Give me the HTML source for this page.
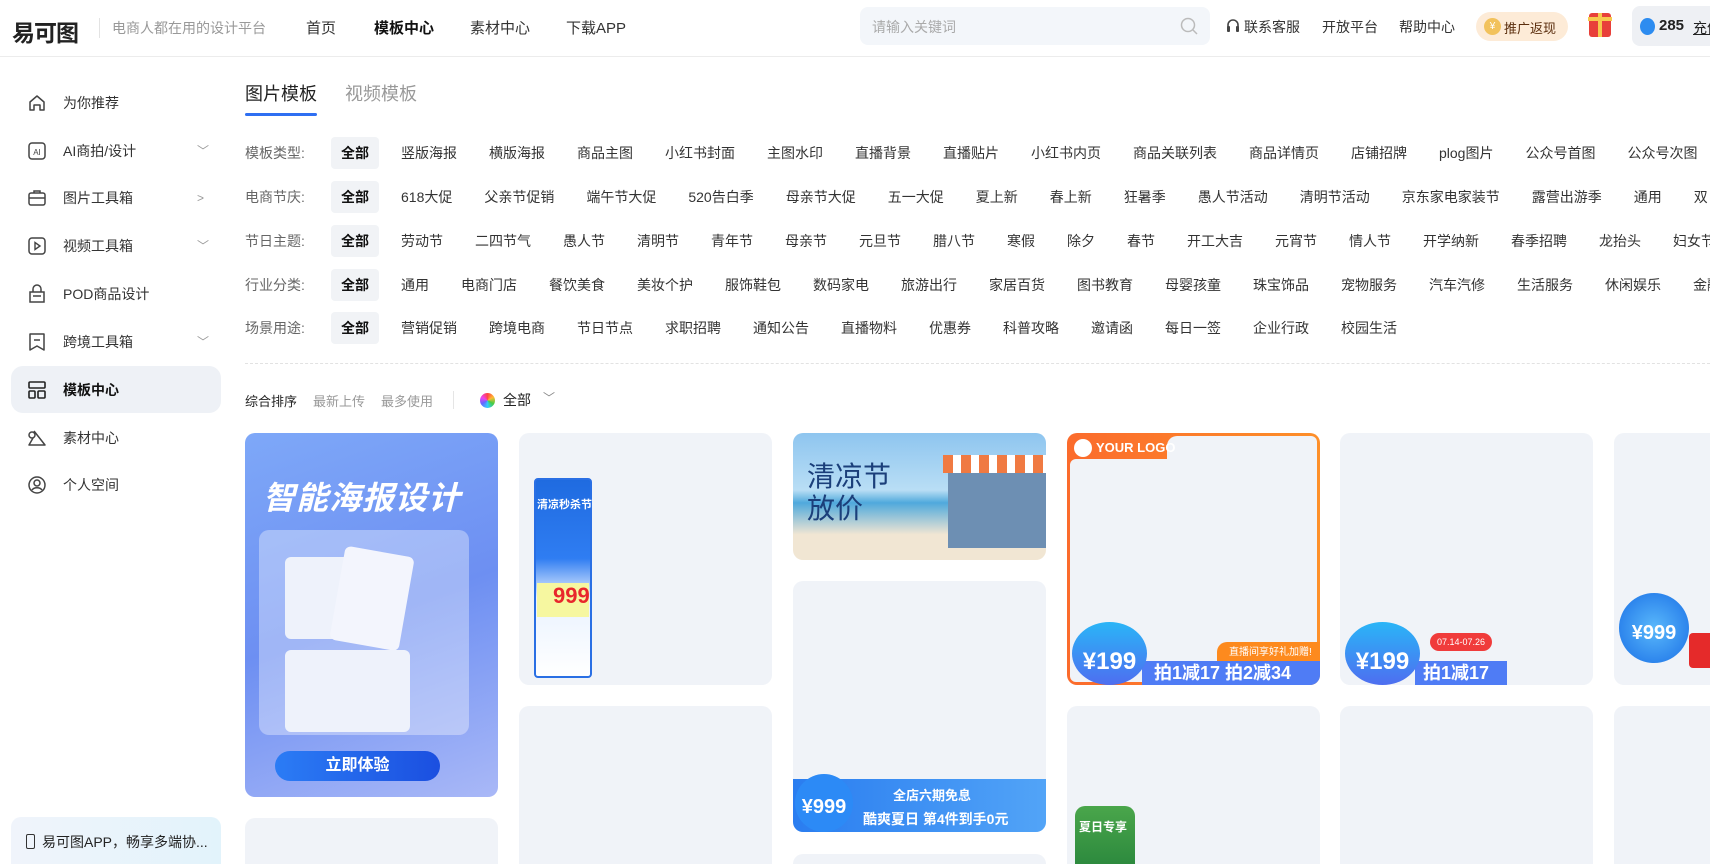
<!DOCTYPE html>
<html><head><meta charset="utf-8">
<style>
*{box-sizing:border-box;margin:0;padding:0}
html,body{width:1710px;height:864px;overflow:hidden}
body{background:#fff;font-family:"Liberation Sans","Noto Sans CJK SC",sans-serif;color:#333}
#wrap{position:relative;width:1710px;height:864px;overflow:hidden}
.abs{position:absolute}
.hdr{position:absolute;left:0;top:0;width:1710px;height:57px;border-bottom:1px solid #ececec}
.nav{position:absolute;top:17px;font-size:15px;color:#333}
.side .it{position:absolute;left:11px;width:210px;height:47px;display:flex;align-items:center;font-size:14px;color:#333;border-radius:12px}
.side .it svg{position:absolute;left:16px}
.side .it span{position:absolute;left:52px}
.side .chev{position:absolute;left:186px;color:#999;font-size:12px}
.row{position:absolute;left:245px;height:32px;display:flex;align-items:center;font-size:14px;white-space:nowrap}
.row .lb{color:#666;width:86px}
.row .c{padding:0 10px;margin-right:12px;height:32px;line-height:32px;color:#333;border-radius:4px}
.row .c.on{background:#f1f3f6;font-weight:bold;color:#111}
.card{position:absolute;width:253px;border-radius:10px;background:#f0f3f8;overflow:hidden}
.cut{border-radius:10px 10px 0 0}
</style></head><body><div id="wrap">

<div class="hdr">
  <div class="abs" style="left:12px;top:14px;font-size:23px;font-weight:bold;color:#222;letter-spacing:-1px">易可图</div>
  <div class="abs" style="left:99px;top:18px;width:1px;height:20px;background:#e3e3e3"></div>
  <div class="abs" style="left:112px;top:18px;font-size:14px;color:#999">电商人都在用的设计平台</div>
  <div class="nav" style="left:306px">首页</div>
  <div class="nav" style="left:374px;font-weight:bold;color:#111">模板中心</div>
  <div class="nav" style="left:470px">素材中心</div>
  <div class="nav" style="left:566px">下载APP</div>
  <div class="abs" style="left:860px;top:7px;width:350px;height:38px;background:#f3f6fa;border-radius:8px">
    <span class="abs" style="left:12px;top:10px;font-size:14px;color:#aaa">请输入关键词</span>
    <svg class="abs" style="left:320px;top:10px" width="18" height="18" viewBox="0 0 18 18"><circle cx="8" cy="8" r="6.5" fill="none" stroke="#bbb" stroke-width="1.5"/><path d="M13 13l4 4" stroke="#bbb" stroke-width="1.5"/></svg>
  </div>
  <svg class="abs" style="left:1225px;top:17px" width="16" height="18" viewBox="0 0 16 18"><path d="M3 10V8a5 5 0 0 1 10 0v2" fill="none" stroke="#444" stroke-width="1.6"/><rect x="2" y="9" width="3" height="6" rx="1" fill="#444"/><rect x="11" y="9" width="3" height="6" rx="1" fill="#444"/></svg>
  <div class="nav" style="left:1244px;font-size:14px;top:17px">联系客服</div>
  <div class="nav" style="left:1322px;font-size:14px;top:17px">开放平台</div>
  <div class="nav" style="left:1399px;font-size:14px;top:17px">帮助中心</div>
  <div class="abs" style="left:1476px;top:12px;width:92px;height:29px;border-radius:15px;background:#fdebd7">
    <div class="abs" style="left:8px;top:6px;width:17px;height:17px;border-radius:50%;background:#f2c25c;color:#fff;font-size:10px;text-align:center;line-height:17px">¥</div>
    <span class="abs" style="left:28px;top:6px;font-size:13px;color:#5a2d0c">推广返现</span>
  </div>
  <div class="abs" style="left:1589px;top:13px;width:22px;height:24px;background:#e8403a;border-radius:3px"><div class="abs" style="left:9px;top:0;width:4px;height:24px;background:#f7c94d"></div><div class="abs" style="left:-1px;top:4px;width:24px;height:4px;background:#f7c94d"></div></div>
  <div class="abs" style="left:1632px;top:6px;width:78px;height:40px;background:#eef0f4;border-radius:8px 0 0 8px;overflow:hidden">
    <div class="abs" style="left:8px;top:12px;width:15px;height:17px;border-radius:50%;background:#2d8cf0"></div>
    <span class="abs" style="left:27px;top:11px;font-size:15px;font-weight:bold;color:#222">285</span>
    <span class="abs" style="left:61px;top:12px;font-size:14px;color:#222;text-decoration:underline;white-space:nowrap">充值</span>
  </div>
</div>

<div class="side">
  <div class="it" style="top:79px"><svg width="20" height="20" viewBox="0 0 20 20"><path d="M3 9l7-6 7 6v8h-4v-5h-6v5H3z" fill="none" stroke="#444" stroke-width="1.5" stroke-linejoin="round"/></svg><span>为你推荐</span></div>
  <div class="it" style="top:127px"><svg width="20" height="20" viewBox="0 0 20 20"><rect x="2" y="2" width="16" height="16" rx="3" fill="none" stroke="#444" stroke-width="1.5"/><text x="10" y="14" font-size="8" text-anchor="middle" fill="#444" font-family="Liberation Sans">AI</text></svg><span>AI商拍/设计</span><i class="chev" style="font-style:normal">﹀</i></div>
  <div class="it" style="top:174px"><svg width="20" height="20" viewBox="0 0 20 20"><rect x="2" y="5" width="16" height="12" rx="2" fill="none" stroke="#444" stroke-width="1.5"/><path d="M7 5V3h6v2M2 10h16" fill="none" stroke="#444" stroke-width="1.5"/></svg><span>图片工具箱</span><i class="chev" style="font-style:normal">&gt;</i></div>
  <div class="it" style="top:222px"><svg width="20" height="20" viewBox="0 0 20 20"><rect x="2" y="2" width="16" height="16" rx="3" fill="none" stroke="#444" stroke-width="1.5"/><path d="M8 6.5v7l5-3.5z" fill="none" stroke="#444" stroke-width="1.4"/></svg><span>视频工具箱</span><i class="chev" style="font-style:normal">﹀</i></div>
  <div class="it" style="top:270px"><svg width="20" height="20" viewBox="0 0 20 20"><path d="M3 8h14v10H3zM6 8V5a4 4 0 0 1 8 0v3M6 12h8" fill="none" stroke="#444" stroke-width="1.5"/></svg><span>POD商品设计</span></div>
  <div class="it" style="top:318px"><svg width="20" height="20" viewBox="0 0 20 20"><path d="M3 2h14v16l-7-4-7 4zM7 8h6" fill="none" stroke="#444" stroke-width="1.5" stroke-linejoin="round"/></svg><span>跨境工具箱</span><i class="chev" style="font-style:normal">﹀</i></div>
  <div class="it" style="top:366px;background:#eef1f6"><svg width="20" height="20" viewBox="0 0 20 20"><rect x="2" y="2" width="16" height="6" rx="1" fill="none" stroke="#222" stroke-width="1.6"/><rect x="2" y="11" width="6" height="7" rx="1" fill="none" stroke="#222" stroke-width="1.6"/><rect x="11" y="11" width="7" height="7" rx="1" fill="none" stroke="#222" stroke-width="1.6"/></svg><span style="font-weight:bold;color:#111">模板中心</span></div>
  <div class="it" style="top:414px"><svg width="20" height="20" viewBox="0 0 20 20"><path d="M7 3l11 14H2l4-7" fill="none" stroke="#444" stroke-width="1.5" stroke-linejoin="round"/><circle cx="5" cy="7" r="3" fill="none" stroke="#444" stroke-width="1.5"/></svg><span>素材中心</span></div>
  <div class="it" style="top:461px"><svg width="20" height="20" viewBox="0 0 20 20"><circle cx="10" cy="10" r="8" fill="none" stroke="#444" stroke-width="1.5"/><circle cx="10" cy="8" r="3" fill="none" stroke="#444" stroke-width="1.5"/><path d="M5 15c2-3 8-3 10 0" fill="none" stroke="#444" stroke-width="1.5"/></svg><span>个人空间</span></div>
  <div class="abs" style="left:11px;top:817px;width:210px;height:47px;border-radius:10px 10px 0 0;background:linear-gradient(90deg,#f0f4fb,#e2f3fb)">
    <div class="abs" style="left:15px;top:17px;width:9px;height:15px;border:1.5px solid #333;border-radius:2px"></div>
    <span class="abs" style="left:31px;top:15px;font-size:14px;color:#222">易可图APP，畅享多端协...</span>
  </div>
</div>

<div class="abs" style="left:245px;top:80px;font-size:18px;color:#222">图片模板</div>
<div class="abs" style="left:345px;top:80px;font-size:18px;color:#999">视频模板</div>
<div class="abs" style="left:245px;top:113px;width:72px;height:3px;background:#2e6ff2;border-radius:2px"></div>

<div class="row" style="top:137px"><span class="lb">模板类型:</span><span class="c on">全部</span><span class="c">竖版海报</span><span class="c">横版海报</span><span class="c">商品主图</span><span class="c">小红书封面</span><span class="c">主图水印</span><span class="c">直播背景</span><span class="c">直播贴片</span><span class="c">小红书内页</span><span class="c">商品关联列表</span><span class="c">商品详情页</span><span class="c">店铺招牌</span><span class="c">plog图片</span><span class="c">公众号首图</span><span class="c">公众号次图</span></div>
<div class="row" style="top:181px"><span class="lb">电商节庆:</span><span class="c on">全部</span><span class="c">618大促</span><span class="c">父亲节促销</span><span class="c">端午节大促</span><span class="c">520告白季</span><span class="c">母亲节大促</span><span class="c">五一大促</span><span class="c">夏上新</span><span class="c">春上新</span><span class="c">狂暑季</span><span class="c">愚人节活动</span><span class="c">清明节活动</span><span class="c">京东家电家装节</span><span class="c">露营出游季</span><span class="c">通用</span><span class="c">双</span></div>
<div class="row" style="top:225px"><span class="lb">节日主题:</span><span class="c on">全部</span><span class="c">劳动节</span><span class="c">二四节气</span><span class="c">愚人节</span><span class="c">清明节</span><span class="c">青年节</span><span class="c">母亲节</span><span class="c">元旦节</span><span class="c">腊八节</span><span class="c">寒假</span><span class="c">除夕</span><span class="c">春节</span><span class="c">开工大吉</span><span class="c">元宵节</span><span class="c">情人节</span><span class="c">开学纳新</span><span class="c">春季招聘</span><span class="c">龙抬头</span><span class="c">妇女节</span></div>
<div class="row" style="top:269px"><span class="lb">行业分类:</span><span class="c on">全部</span><span class="c">通用</span><span class="c">电商门店</span><span class="c">餐饮美食</span><span class="c">美妆个护</span><span class="c">服饰鞋包</span><span class="c">数码家电</span><span class="c">旅游出行</span><span class="c">家居百货</span><span class="c">图书教育</span><span class="c">母婴孩童</span><span class="c">珠宝饰品</span><span class="c">宠物服务</span><span class="c">汽车汽修</span><span class="c">生活服务</span><span class="c">休闲娱乐</span><span class="c">金融</span></div>
<div class="row" style="top:312px"><span class="lb">场景用途:</span><span class="c on">全部</span><span class="c">营销促销</span><span class="c">跨境电商</span><span class="c">节日节点</span><span class="c">求职招聘</span><span class="c">通知公告</span><span class="c">直播物料</span><span class="c">优惠券</span><span class="c">科普攻略</span><span class="c">邀请函</span><span class="c">每日一签</span><span class="c">企业行政</span><span class="c">校园生活</span></div>

<div class="abs" style="left:245px;top:363px;width:1465px;border-top:1px dashed #e2e2e2"></div>

<div class="abs" style="left:245px;top:391px;font-size:13px;color:#222">综合排序</div>
<div class="abs" style="left:313px;top:391px;font-size:13px;color:#999">最新上传</div>
<div class="abs" style="left:381px;top:391px;font-size:13px;color:#999">最多使用</div>
<div class="abs" style="left:453px;top:391px;width:1px;height:18px;background:#e5e5e5"></div>
<div class="abs" style="left:480px;top:393px;width:15px;height:15px;border-radius:50%;background:conic-gradient(#f44,#fb3,#4c4,#3cf,#66f,#e4e,#f44)"></div>
<div class="abs" style="left:503px;top:390px;font-size:14px;color:#222">全部</div>
<div class="abs" style="left:543px;top:389px;font-size:12px;color:#888">﹀</div>

<!-- col1 -->
<div class="card" style="left:245px;top:433px;height:364px;background:linear-gradient(160deg,#7ea8f8,#6d8ff2 50%,#a9b8f7)">
  <div class="abs" style="left:18px;top:40px;font-size:32px;font-weight:bold;color:#fff;font-style:italic;letter-spacing:1px">智能海报设计</div>
  <div class="abs" style="left:14px;top:97px;width:210px;height:205px;background:rgba(255,255,255,.35);border-radius:10px"></div>
  <div class="abs" style="left:40px;top:124px;width:75px;height:82px;background:#eef2fb;border-radius:6px"></div>
  <div class="abs" style="left:92px;top:118px;width:70px;height:95px;background:#f3f5fd;border-radius:6px;transform:rotate(10deg)"></div>
  <div class="abs" style="left:40px;top:217px;width:75px;height:82px;background:#eef2fb;border-radius:6px"></div>
  <div class="abs" style="left:90px;top:217px;width:75px;height:82px;background:#eef2fb;border-radius:6px"></div>
  <div class="abs" style="left:30px;top:318px;width:165px;height:30px;border-radius:15px;background:linear-gradient(90deg,#2b7cf5,#1b4fe0);color:#fff;font-size:16px;font-weight:bold;text-align:center;line-height:30px">立即体验</div>
</div>
<div class="card cut" style="left:245px;top:818px;height:46px"></div>
<!-- col2 -->
<div class="card" style="left:519px;top:433px;height:252px">
  <div class="abs" style="left:15px;top:45px;width:58px;height:200px;background:linear-gradient(#1f6be0,#2f7df2 40%,#e9f2ff 60%,#fff);border:2px solid #2a6fe4;border-radius:4px"></div>
  <div class="abs" style="left:18px;top:63px;font-size:11px;color:#fff;font-weight:bold">清凉秒杀节</div>
  <div class="abs" style="left:18px;top:150px;width:52px;height:34px;background:#f6f7a0"><span style="color:#e8272c;font-size:22px;font-weight:bold;margin-left:16px">999</span></div>
</div>
<div class="card cut" style="left:519px;top:706px;height:158px"></div>
<!-- col3 -->
<div class="card" style="left:793px;top:433px;height:127px;background:linear-gradient(180deg,#8ec5ef 0%,#b9def5 45%,#4fa9dc 55%,#f1e6d3 80%)">
  <div class="abs" style="left:14px;top:28px;font-size:28px;color:#1b3f7a;line-height:32px">清凉节<br>放价</div>
  <div class="abs" style="left:150px;top:22px;width:103px;height:18px;background:repeating-linear-gradient(90deg,#f07a42 0 10px,#fff 10px 18px)"></div>
  <div class="abs" style="left:155px;top:40px;width:98px;height:75px;background:#6d8fb3"></div>
</div>
<div class="card" style="left:793px;top:581px;height:251px">
  <div class="abs" style="left:0;top:198px;width:253px;height:53px;background:linear-gradient(90deg,#2a7df0,#52a4f7)"></div>
  <div class="abs" style="left:2px;top:193px;width:58px;height:58px;border-radius:50%;background:#2c8af6;color:#fff;font-size:20px;font-weight:bold;text-align:center;line-height:66px">¥999</div>
  <div class="abs" style="left:100px;top:204px;color:#fff;font-size:13px;font-weight:bold">全店六期免息</div>
  <div class="abs" style="left:70px;top:228px;color:#fff;font-size:14px;font-weight:bold">酷爽夏日 第4件到手0元</div>
</div>
<div class="card cut" style="left:793px;top:854px;height:10px"></div>
<!-- col4 -->
<div class="card" style="left:1067px;top:433px;height:252px;background:linear-gradient(90deg,#fb6b2c,#fd8f2a);">
  <div class="abs" style="left:3px;top:26px;width:247px;height:223px;background:#f0f3f8;border-radius:6px"></div>
  <div class="abs" style="left:100px;top:3px;width:150px;height:30px;background:#f0f3f8;border-radius:10px 6px 0 0"></div>
  <div class="abs" style="left:7px;top:6px;width:18px;height:18px;border-radius:50%;background:#fff"></div>
  <div class="abs" style="left:29px;top:7px;color:#fff;font-size:13px;font-weight:bold">YOUR LOGO</div>
  <div class="abs" style="left:150px;top:209px;width:103px;height:22px;border-radius:10px 0 0 0;background:#fd8a1e;color:#fff;font-size:10px;line-height:22px;padding-left:12px">直播间享好礼加赠!</div>
  <div class="abs" style="left:75px;top:228px;width:178px;height:24px;background:#4f7cf5;color:#fff;font-size:18px;font-weight:bold;line-height:24px;padding-left:12px">拍1减17 拍2减34</div>
  <div class="abs" style="left:5px;top:189px;width:75px;height:63px;border-radius:50%;background:linear-gradient(#2ab5f7,#4e6ef0);color:#fff;text-align:center;font-size:24px;font-weight:bold;line-height:80px">¥199</div>
</div>
<div class="card cut" style="left:1067px;top:706px;height:158px">
  <div class="abs" style="left:8px;top:100px;width:60px;height:58px;border-radius:10px 10px 0 0;background:linear-gradient(#4aa64b,#2d8a3e)"></div>
  <div class="abs" style="left:12px;top:112px;font-size:12px;font-weight:bold;color:#fff">夏日专享</div>
</div>
<!-- col5 -->
<div class="card" style="left:1340px;top:433px;height:252px">
  <div class="abs" style="left:75px;top:228px;width:92px;height:24px;background:#4f7cf5;color:#fff;font-size:18px;font-weight:bold;line-height:24px;padding-left:8px">拍1减17</div>
  <div class="abs" style="left:90px;top:200px;width:62px;height:18px;border-radius:9px;background:#f03b3b;color:#fff;font-size:9px;text-align:center;line-height:18px">07.14-07.26</div>
  <div class="abs" style="left:5px;top:189px;width:75px;height:63px;border-radius:50%;background:linear-gradient(#2ab5f7,#4e6ef0);color:#fff;text-align:center;font-size:24px;font-weight:bold;line-height:80px">¥199</div>
</div>
<div class="card cut" style="left:1340px;top:706px;height:158px"></div>
<!-- col6 -->
<div class="card" style="left:1614px;top:433px;width:96px;border-radius:10px 0 0 10px;height:252px">
  <div class="abs" style="left:5px;top:160px;width:70px;height:70px;border-radius:50%;background:radial-gradient(#59b8fb,#1a6fe6);color:#fff;text-align:center;font-size:20px;font-weight:bold;line-height:80px">¥999</div>
  <div class="abs" style="left:75px;top:200px;width:21px;height:35px;background:#e52a2a;border-radius:4px 0 0 4px"></div>
</div>
<div class="card" style="left:1614px;top:706px;width:96px;border-radius:10px 0 0 0;height:158px"></div>

</div></body></html>
